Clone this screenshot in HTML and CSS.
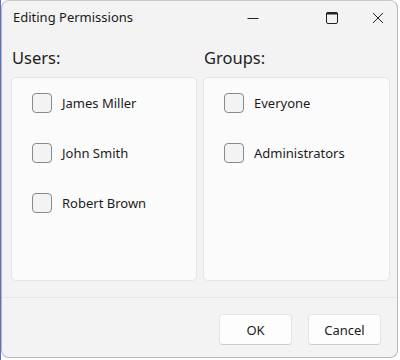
FILE: index.html
```html
<!DOCTYPE html>
<html>
<head>
<meta charset="utf-8">
<link rel="stylesheet" href="styles.css">
</head>
<body>
<div class="desk">
  <div class="window">
    <div class="titlebar">
      <div class="title">Editing Permissions</div>
      <div class="caption">
        <div class="cbtn cmin"><svg width="12" height="12" viewBox="0 0 12 12"><line x1="0.5" y1="6.5" x2="11.5" y2="6.5" stroke="#222" stroke-width="1"/></svg></div>
        <div class="cbtn cmax"><svg width="14" height="14" viewBox="0 0 14 14"><rect x="1.5" y="1.5" width="11" height="11" rx="1.5" fill="none" stroke="#222" stroke-width="1"/><line x1="1.5" y1="2.5" x2="12.5" y2="2.5" stroke="#222" stroke-width="2"/></svg></div>
        <div class="cbtn cclose"><svg width="12" height="12" viewBox="0 0 12 12"><path d="M1 1 L11 11 M11 1 L1 11" stroke="#222" stroke-width="1" fill="none"/></svg></div>
      </div>
    </div>
    <div class="content">
      <div class="col">
        <div class="heading">Users:</div>
        <div class="panel">
          <label class="item"><span class="box"></span><span class="lbl">James Miller</span></label>
          <label class="item"><span class="box"></span><span class="lbl">John Smith</span></label>
          <label class="item"><span class="box"></span><span class="lbl">Robert Brown</span></label>
        </div>
      </div>
      <div class="col">
        <div class="heading">Groups:</div>
        <div class="panel">
          <label class="item"><span class="box"></span><span class="lbl">Everyone</span></label>
          <label class="item"><span class="box"></span><span class="lbl">Administrators</span></label>
        </div>
      </div>
    </div>
    <div class="footer">
      <button class="btn">OK</button>
      <button class="btn">Cancel</button>
    </div>
  </div>
</div>
</body>
</html>
```

FILE: styles.css
```css
html, body {
  margin: 0;
  padding: 0;
}
body {
  width: 400px;
  height: 360px;
  overflow: hidden;
  background: #ffffff;
  font-family: "Noto Sans", "Open Sans", sans-serif;
  color: #1b1b1b;
}
.desk {
  width: 400px;
  height: 360px;
  background: linear-gradient(to right, #5a6ed0 0, #5a6ed0 1px, #ffffff 1px);
}
.window {
  box-sizing: border-box;
  width: 397px;
  height: 358px;
  margin-left: 1px;
  background: #f3f3f3;
  border: 1px solid #b9b9b9;
  border-top-color: #c8c8c8;
  border-radius: 8px;
  display: flex;
  flex-direction: column;
  overflow: hidden;
}
.titlebar {
  height: 33px;
  display: flex;
  align-items: center;
  justify-content: space-between;
}
.title {
  padding-left: 11px;
  font-size: 13px;
  color: #1a1a1a;
  margin-top: -1px;
}
.caption {
  display: flex;
  height: 100%;
  align-items: center;
}
.cbtn {
  width: 46px;
  height: 32px;
  display: flex;
  align-items: center;
  justify-content: center;
}
.cmin { margin-right: 33px; }
.cmax { margin-right: 3px; }
.cclose { width: 39px; }
.content {
  display: grid;
  grid-template-columns: 186px 187px;
  column-gap: 6px;
  padding: 0 6px 0 9px;
}
.heading {
  font-size: 16.5px;
  height: 43px;
  line-height: 20px;
  padding-top: 14px;
  padding-left: 1px;
  box-sizing: border-box;
  color: #222;
}
.panel {
  box-sizing: border-box;
  height: 204px;
  background: #fbfbfb;
  border: 1px solid #e5e5e5;
  border-radius: 5px;
  padding: 15px 0 0 20px;
  display: flex;
  flex-direction: column;
  gap: 30px;
}
.item {
  display: flex;
  align-items: center;
  height: 20px;
}
.box {
  box-sizing: border-box;
  width: 20px;
  height: 20px;
  border: 1px solid #8a8a8a;
  border-radius: 4px;
  background: #f3f3f3;
  margin-right: 10px;
}
.lbl {
  font-size: 13px;
  color: #1b1b1b;
}
.footer {
  margin-top: 16px;
  border-top: 1px solid #e6e6e6;
  display: flex;
  justify-content: flex-end;
  gap: 16px;
  padding: 16px 16px 0 0;
}
.btn {
  box-sizing: border-box;
  width: 73px;
  height: 31px;
  background: #fdfdfd;
  border: 1px solid #e5e5e5;
  border-bottom-color: #cccccc;
  border-radius: 4px;
  font-family: "Noto Sans", "Open Sans", sans-serif;
  font-size: 13px;
  color: #1b1b1b;
  padding: 0;
}
```
